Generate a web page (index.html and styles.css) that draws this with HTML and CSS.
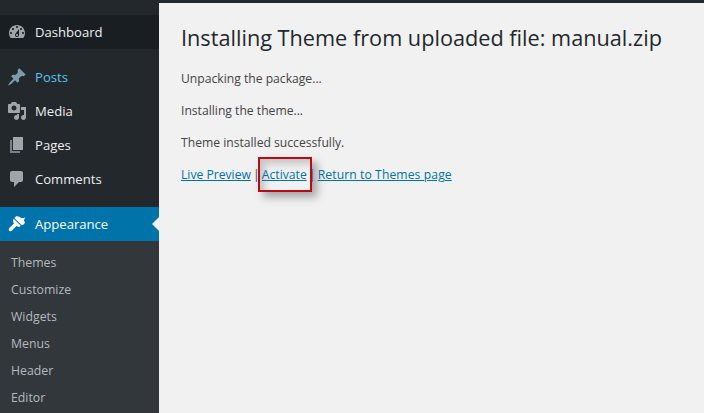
FILE: index.html
```html
<!DOCTYPE html>
<html lang="en">
<head>
<meta charset="utf-8">
<title>Installing Theme</title>
<link rel="stylesheet" href="styles.css">
</head>
<body>
<div class="topbar"></div>
<div class="layout">
  <nav class="sidebar">
    <a class="item current-dark"><svg class="icon" viewBox="0 0 20 20"><path d="M3.760 16h12.480c1.100-1.370 1.760-3.110 1.760-5 0-4.420-3.580-8-8-8s-8 3.580-8 8c0 1.890.66 3.630 1.760 5zM10 4c.55 0 1 .45 1 1s-.45 1-1 1-1-.45-1-1 .45-1 1-1zM6 6c.55 0 1 .45 1 1s-.45 1-1 1-1-.45-1-1 .45-1 1-1zm8 0c.55 0 1 .45 1 1s-.45 1-1 1-1-.45-1-1 .45-1 1-1zm-5.370 5.550L12 7v6c0 1.100-.9 2-2 2s-2-.9-2-2c0-.57.24-1.080.63-1.450zM4 10c.55 0 1 .45 1 1s-.45 1-1 1-1-.45-1-1 .45-1 1-1zm12 0c.55 0 1 .45 1 1s-.45 1-1 1-1-.45-1-1 .45-1 1-1zm-5 3c0-.55-.45-1-1-1s-1 .45-1 1 .45 1 1 1 1-.45 1-1z"/></svg><span>Dashboard</span></a>
    <div class="group">
      <a class="item posts"><svg class="icon" viewBox="0 0 20 20"><path d="M10.440 3.020l1.820-1.820 6.360 6.350-1.830 1.820c-1.050-.68-2.480-.57-3.410.36l-.75.75c-.92.93-1.040 2.350-.35 3.410l-1.830 1.820-2.410-2.410-2.800 2.790c-.42.42-3.380 2.710-3.800 2.290s1.860-3.390 2.280-3.810l2.790-2.790L4.100 9.360l1.830-1.820c1.050.69 2.480.57 3.400-.36l.75-.75c.93-.92 1.050-2.350.36-3.410z"/></svg><span>Posts</span></a>
      <a class="item"><svg class="icon" viewBox="0 0 20 20"><path d="M13 11V4c0-.55-.45-1-1-1h-1.670L9 1H5L3.670 3H2c-.55 0-1 .45-1 1v7c0 .55.45 1 1 1h10c.55 0 1-.45 1-1zM7 4.500c1.380 0 2.500 1.120 2.500 2.500S8.380 9.500 7 9.500 4.500 8.380 4.500 7 5.620 4.500 7 4.500zM14 6h5v10.500c0 1.380-1.120 2.500-2.500 2.500S14 17.880 14 16.500s1.120-2.500 2.500-2.500c.17 0 .34.020.5.050V9h-3V6zm-4 8.050V13h2v3.500c0 1.380-1.120 2.500-2.500 2.500S7 17.880 7 16.500 8.120 14 9.500 14c.17 0 .34.020.5.050z"/></svg><span>Media</span></a>
      <a class="item"><svg class="icon" viewBox="0 0 20 20"><path d="M6 15V2h10v13H6z"/><path class="shade" d="M5 16h8v2H3V5h2v11z"/></svg><span>Pages</span></a>
      <a class="item"><svg class="icon" viewBox="0 0 20 20"><path d="M5 2h9c1.100 0 2 .9 2 2v7c0 1.100-.9 2-2 2h-2l-5 5v-5H5c-1.100 0-2-.9-2-2V4c0-1.100.9-2 2-2z"/></svg><span>Comments</span></a>
    </div>
    <a class="item active"><svg class="icon" viewBox="0 0 20 20"><path d="M14.500 11L7.400 4l1.500-1.500c.5-.56 2.300-.47 3.500.32 1.200.8 1.430 1.280 2.660 1.280 1.220 0 3.440-.6 3.440-.6s-1.500 1.500-1.500 2.700c0 1 .9 1.500.9 2.300 0 .9-1.900 2.500-1.900 2.500zM6.700 4.700l7.100 7.100-1.500 1.100-1.900-.4-.7-.7-4.500 4.500c-.8.8-2 1.300-3 .4-.9-1-.4-2.200.4-3l4.500-4.500-.7-.7-.4-1.900z"/></svg><span>Appearance</span></a>
    <ul class="submenu">
      <li>Themes</li>
      <li>Customize</li>
      <li>Widgets</li>
      <li>Menus</li>
      <li>Header</li>
      <li>Editor</li>
    </ul>
  </nav>
  <main class="content">
    <h1>Installing Theme from uploaded file: manual.zip</h1>
    <p>Unpacking the package...</p>
    <p>Installing the theme...</p>
    <p>Theme installed successfully.</p>
    <p class="actions"><a href="#">Live Preview</a> | <span class="marked"><a href="#">Activate</a></span> | <a class="return" href="#">Return to Themes page</a></p>
  </main>
</div>
</body>
</html>
```
FILE: styles.css
```css
* { box-sizing: border-box; }
html, body { margin: 0; height: 413px; overflow: hidden; }
body { background: #f1f1f1; font-family: "Open Sans", "Noto Sans", sans-serif; color: #444; }
.topbar { height: 3px; background: #23282d; }
.layout { display: flex; height: 410px; }
.sidebar { width: 159px; flex: none; background: #23282d; padding-top: 12px; overflow: hidden; }
.item { display: flex; align-items: center; height: 34px; padding-left: 7px; color: #eee; font-size: 13.100px; position: relative; }
.item span { margin-left: 8px; }
.icon { width: 20px; height: 20px; fill: #a0a5aa; flex: none; }
.shade { fill: #7d7f8c; }
.current-dark { background: #191e23; }
.group { margin-top: 11px; margin-bottom: 11px; }
.posts { color: #5cc4ec; }
.posts .icon { fill: #7a9cad; }
.active { background: #0073aa; color: #fff; }
.active .icon { fill: #fff; }
.active::after { content: ""; position: absolute; right: 0; top: 10px; border: 7px solid transparent; border-left-width: 0; border-right-color: #f1f1f1; }
.submenu { list-style: none; margin: 0; padding: 8px 0 0 11px; background: #32373c; height: 172px; color: #b4b9be; font-size: 12.300px; }
.submenu li { height: 27px; line-height: 27px; }
.content { flex: 1; padding: 0 22px; }
h1 { margin: 20px 0 0; font-size: 21.700px; font-weight: 400; color: #23282d; line-height: 30px; white-space: nowrap; }
p { margin: 0 0 14px; font-size: 12.150px; line-height: 18px; color: #444; white-space: nowrap; }
h1 + p { margin-top: 17px; }
.actions { word-spacing: -1px; }
.actions a { word-spacing: 0; }
.actions .return { letter-spacing: .1px; }
a { color: #0073aa; }
.marked { position: relative; }
.marked::after { content: ""; position: absolute; left: -4px; top: -9px; width: 54px; height: 35px; box-sizing: border-box; border: 2px solid #b50d14; box-shadow: 5px 5px 8px rgba(70,70,70,.45), inset 5px 5px 7px rgba(70,70,70,.25); }
```
